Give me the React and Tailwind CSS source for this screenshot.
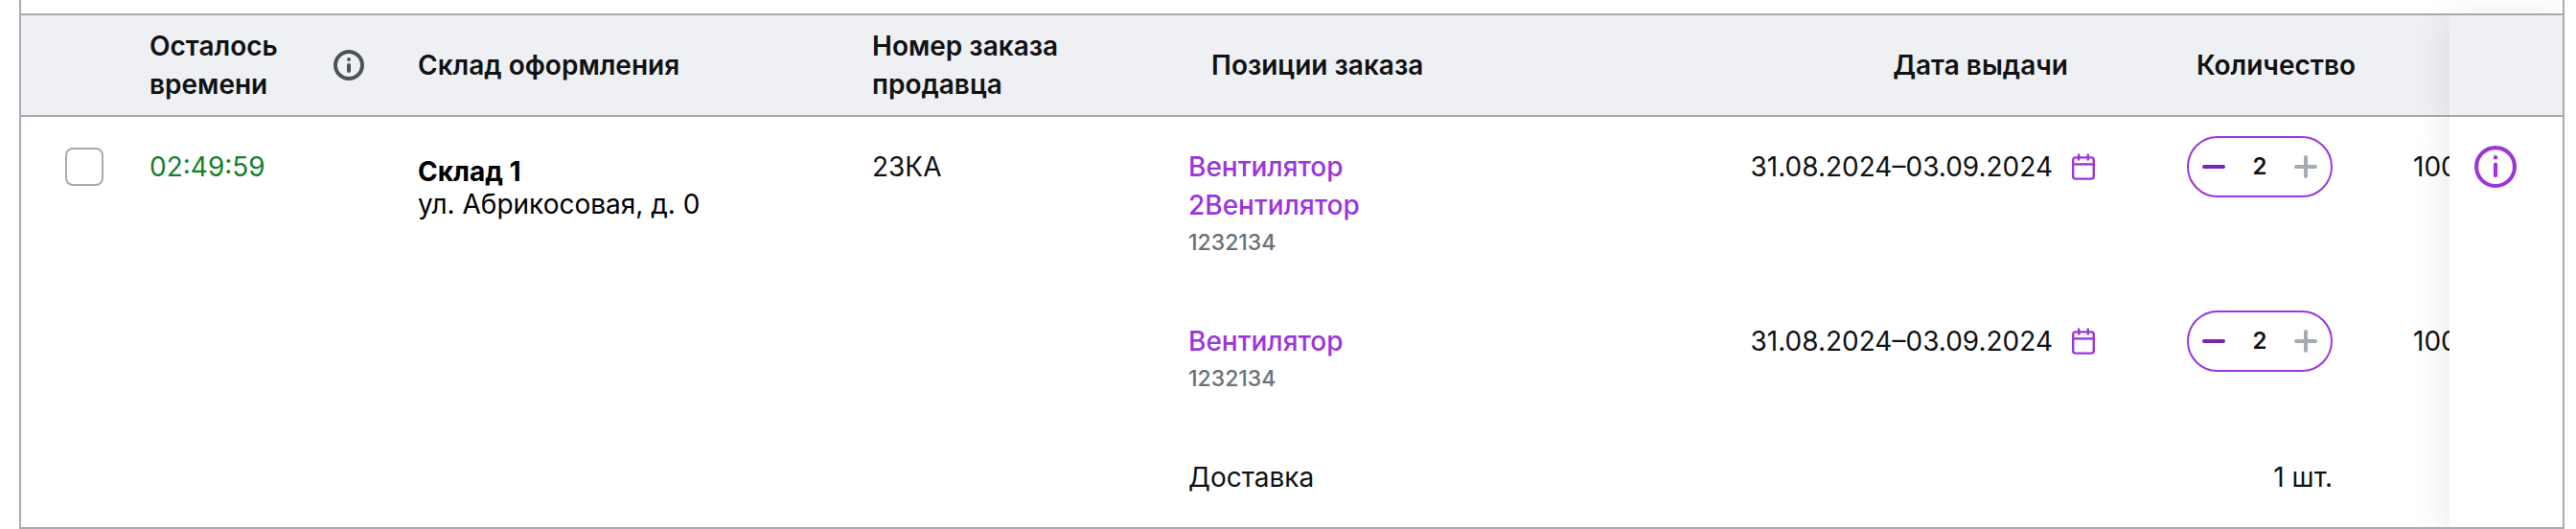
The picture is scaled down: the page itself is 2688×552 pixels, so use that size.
import React, { useState } from "react";

const HEADER_CELL = "h-[108px] border-y-2 border-[#a6abb1] bg-[#eff0f3] font-semibold";
const STICKY_CELL = "sticky right-0 shadow-[0_8px_40px_rgba(0,0,0,0.11)]";

function InfoIcon({ className, thin }) {
  return (
    <svg viewBox="0 0 32 32" className={className} fill="none" stroke="currentColor" aria-hidden="true">
      <circle cx="16" cy="16" r={thin ? 14.5 : 14} strokeWidth={thin ? 3 : 4} />
      <path d={thin ? "M16 14.2v8.4" : "M16 16v6"} strokeWidth={thin ? 3 : 4} strokeLinecap="round" />
      <circle cx="16" cy={thin ? 8.9 : 10} r={thin ? 1.6 : 2} fill="currentColor" stroke="none" />
    </svg>
  );
}

function CalendarIcon() {
  return (
    <svg viewBox="0 0 24 28" className="h-7 w-6" fill="none" stroke="currentColor" strokeWidth="2.4" aria-hidden="true">
      <rect x="1.2" y="4.4" width="21.6" height="22.2" rx="2.6" />
      <path d="M1.2 11.4h21.6" />
      <path d="M7.2 1.4v5.2M16.8 1.4v5.2" strokeLinecap="round" />
    </svg>
  );
}

function Quantity({ label }) {
  const [value, setValue] = useState("2");
  return (
    <div className="flex h-16 w-38 items-center justify-between rounded-full border-2 border-[#9b36db] px-3.5">
      <button type="button" aria-label="Уменьшить" className="text-[#7a24b0]">
        <svg viewBox="0 0 24 24" className="size-6" stroke="currentColor" strokeWidth="4" strokeLinecap="round">
          <path d="M2 12h20" />
        </svg>
      </button>
      <input
        aria-label={label}
        value={value}
        onChange={(e) => setValue(e.target.value)}
        className="w-12 bg-transparent text-center text-2xl font-semibold outline-none"
      />
      <button type="button" aria-label="Увеличить" className="text-[#a6abb1]">
        <svg viewBox="0 0 24 24" className="size-6" stroke="currentColor" strokeWidth="4" strokeLinecap="round">
          <path d="M2 12h20M12 2v20" />
        </svg>
      </button>
    </div>
  );
}

function ItemCells({ name, code }) {
  return (
    <>
      <td className="px-6 py-8">
        <a href="#item" className="block w-52 font-medium text-[#9b36db]">{name}</a>
        <div className="text-[23px] leading-[38px] font-medium text-[#68727a]">{code}</div>
      </td>
      <td className="px-6 py-8">
        <div className="flex items-center justify-end gap-5 whitespace-nowrap">
          31.08.2024–03.09.2024
          <button type="button" aria-label="Изменить дату" className="text-[#9b36db]">
            <CalendarIcon />
          </button>
        </div>
      </td>
      <td className="px-6 py-5">
        <div className="flex justify-end">
          <Quantity label={"Количество: " + name} />
        </div>
      </td>
      <td className="py-8 pl-15 whitespace-nowrap">1000 ₽</td>
    </>
  );
}

export default function App() {
  return (
    <div className="bg-white pr-3 pl-5 font-['Inter','Liberation_Sans',sans-serif] text-[28px] leading-10 text-[#101214]">
      <div className="overflow-x-auto border-x-2 border-b-2 border-[#a6abb1] pt-3.5 [scrollbar-width:none]">
        <table className="w-full min-w-[2772px] table-fixed border-separate border-spacing-0 text-left [&_td]:align-top">
          <colgroup>
            <col className="w-[110px]" />
            <col className="w-[280px]" />
            <col className="w-[474px]" />
            <col className="w-[330px]" />
            <col />
            <col className="w-[400px]" />
            <col className="w-[248px]" />
            <col className="w-[218px]" />
            <col className="w-[118px]" />
          </colgroup>
          <thead>
            <tr>
              <th className={HEADER_CELL} aria-label="Выбор" />
              <th className={HEADER_CELL + " pr-8 pl-6"}>
                <div className="flex items-center justify-between">
                  <span className="w-36">Осталось времени</span>
                  <button type="button" aria-label="Подсказка" className="text-[#4b5359]">
                    <InfoIcon className="size-8" />
                  </button>
                </div>
              </th>
              <th className={HEADER_CELL + " px-6"}>Склад оформления</th>
              <th className={HEADER_CELL + " px-6"}>
                <div className="w-56">Номер заказа продавца</div>
              </th>
              <th className={HEADER_CELL + " px-12"}>Позиции заказа</th>
              <th className={HEADER_CELL + " pr-13 text-right"}>Дата выдачи</th>
              <th className={HEADER_CELL + " text-right"}>Количество</th>
              <th className={HEADER_CELL} aria-label="Цена" />
              <th className={HEADER_CELL + " " + STICKY_CELL} aria-label="Информация" />
            </tr>
          </thead>
          <tbody>
            <tr>
              <td rowSpan={3} className="pt-8 pl-[46px]">
                <input
                  type="checkbox"
                  aria-label="Выбрать заказ"
                  className="block size-10 appearance-none rounded-lg border-2 border-[#a6abb1] bg-white checked:bg-[#9b36db]"
                />
              </td>
              <td rowSpan={3} className="px-6 pt-8 text-[#14802b]">02:49:59</td>
              <td rowSpan={3} className="px-6 pt-10 leading-[34px] text-black">
                <div className="font-bold">Склад 1</div>
                <div>ул. Абрикосовая, д. 0</div>
              </td>
              <td rowSpan={3} className="px-6 pt-8">23КА</td>
              <ItemCells name="Вентилятор 2Вентилятор" code="1232134" />
              <td rowSpan={3} className={STICKY_CELL + " bg-white pt-[30px] pl-[26px] [clip-path:inset(0_0_0_-60px)]"}>
                <button type="button" aria-label="Информация о заказе" className="block text-[#9b36db]">
                  <InfoIcon thin className="size-11" />
                </button>
              </td>
            </tr>
            <tr>
              <ItemCells name="Вентилятор" code="1232134" />
            </tr>
            <tr>
              <td className="px-6 py-8">Доставка</td>
              <td />
              <td className="px-6 py-8 text-right">1 шт.</td>
              <td />
            </tr>
          </tbody>
        </table>
      </div>
    </div>
  );
}
